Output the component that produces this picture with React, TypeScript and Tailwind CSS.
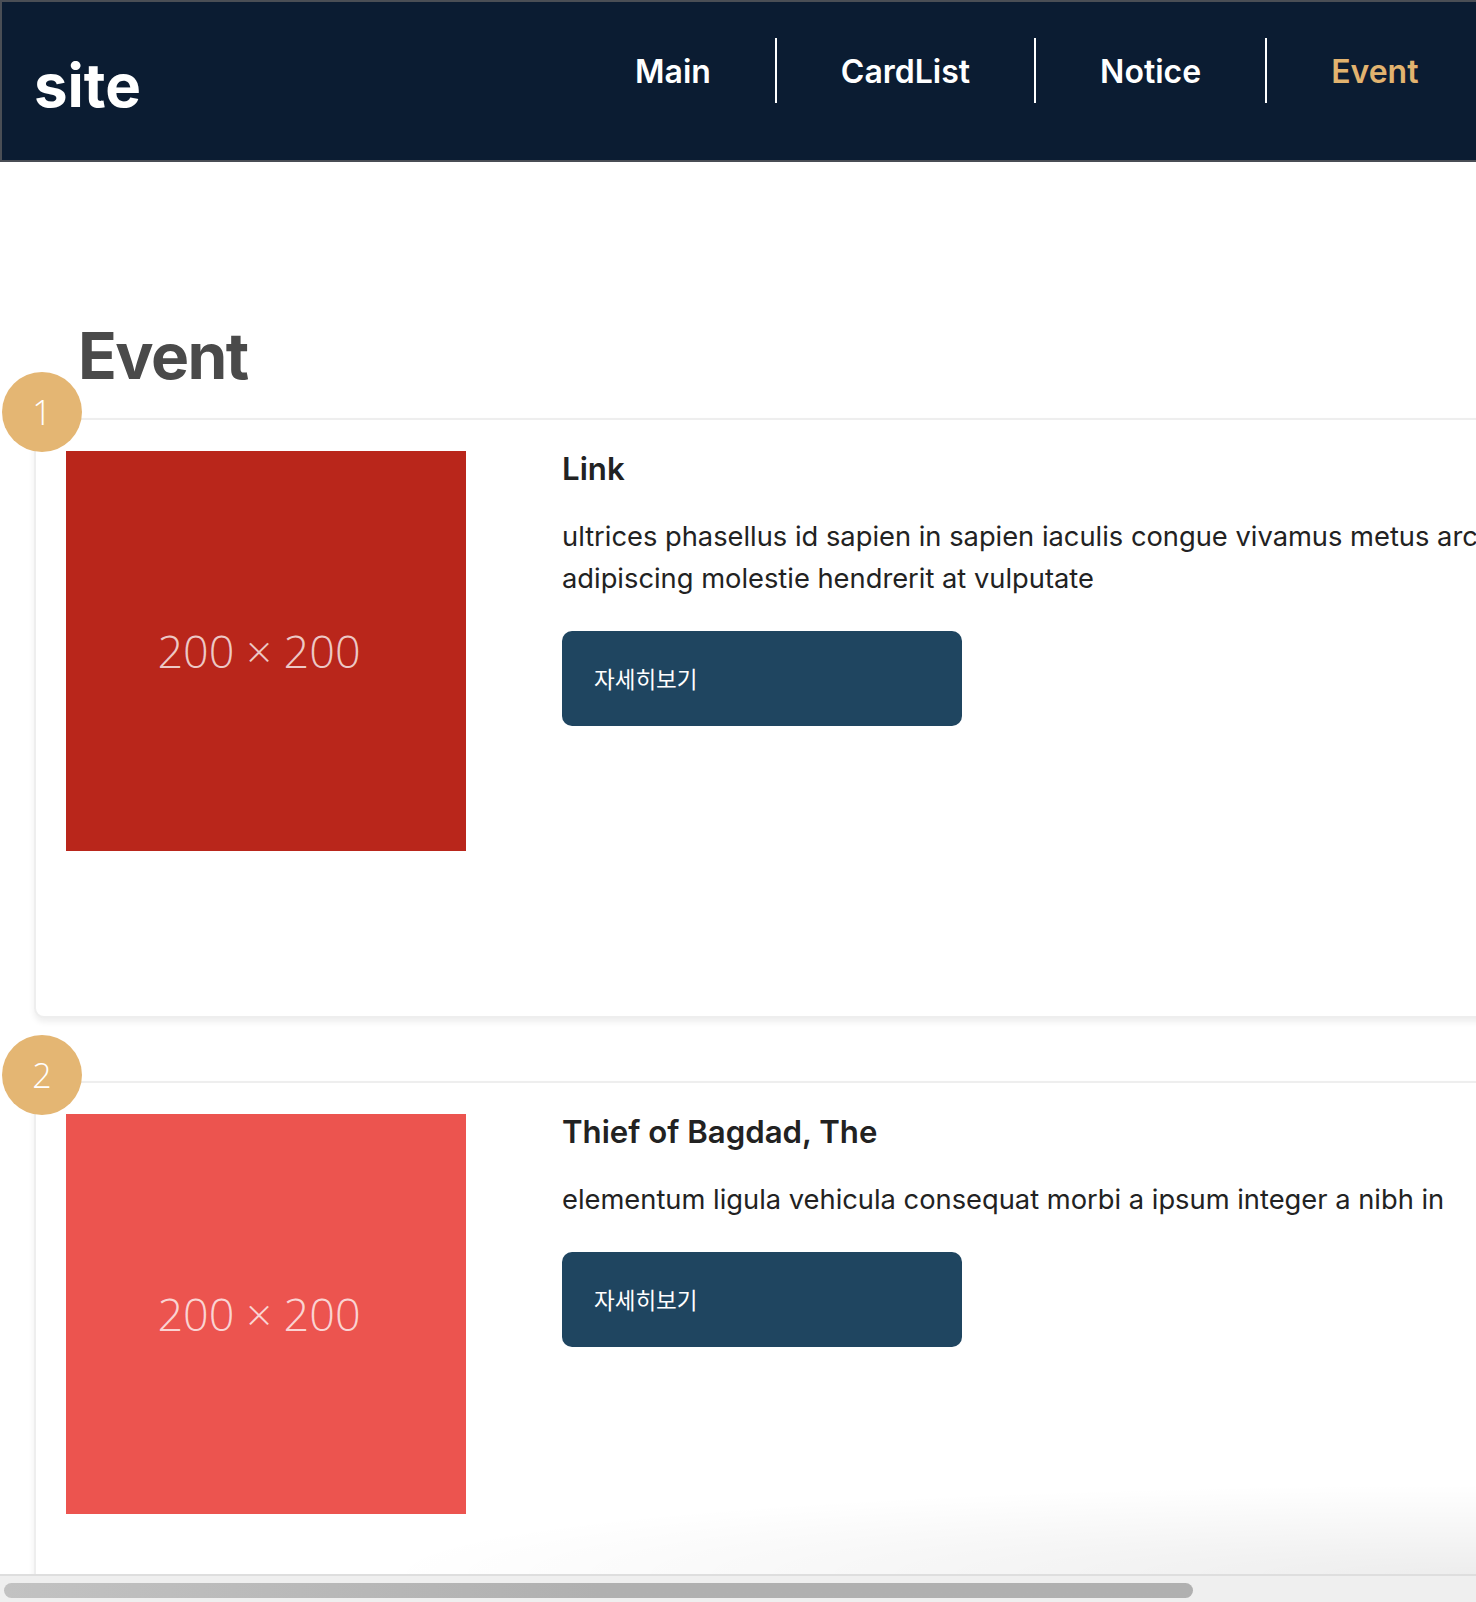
import React from "react";

type EventItem = {
  id: number;
  title: string;
  lines: string[];
  color: string;
};

const events: EventItem[] = [
  {
    id: 1,
    title: "Link",
    lines: [
      "ultrices phasellus id sapien in sapien iaculis congue vivamus metus arcu",
      "adipiscing molestie hendrerit at vulputate",
    ],
    color: "bg-[#b9261b]",
  },
  {
    id: 2,
    title: "Thief of Bagdad, The",
    lines: ["elementum ligula vehicula consequat morbi a ipsum integer a nibh in"],
    color: "bg-[#ec544f]",
  },
];

const navItems = ["Main", "CardList", "Notice", "Event"];

const EventCard = ({ item }: { item: EventItem }) => (
  <div className="relative flex h-[600px] rounded-[10px] border-2 border-[#eeeeee] bg-white px-[30px] pt-[31px] shadow-[0_4px_6px_rgba(0,0,0,0.07)]">
    {/* number badge */}
    <div className="absolute -left-[34px] -top-[48px] flex h-[80px] w-[80px] items-center justify-center rounded-full bg-[#e4b673] font-['Open_Sans',sans-serif] text-[34px] font-light text-white">
      {item.id}
    </div>

    {/* placeholder image */}
    <div className={`flex h-[400px] w-[400px] shrink-0 items-center justify-center pr-[14px] ${item.color}`}>
      <span className="font-['Open_Sans',sans-serif] text-[45px] font-light text-white/75">200 × 200</span>
    </div>

    <div className="ml-[96px] flex flex-col items-start">
      <h3 className="pt-[2px] text-[31.2px] font-semibold leading-[32px] text-[#222222]">{item.title}</h3>
      <p className="mt-[31px] whitespace-nowrap text-[27.3px] leading-[42px] text-[#222222]">
        {item.lines.map((l, i) => (
          <span key={i} className="block">
            {l}
          </span>
        ))}
      </p>
      <button className="mt-[31px] flex h-[95px] w-[400px] items-center rounded-[10px] bg-[#1f4560] pl-[32px] font-['Noto_Sans_CJK_KR',sans-serif] text-[22.5px] text-white">
        자세히보기
      </button>
    </div>
  </div>
);

export default function App() {
  return (
    <div className="relative h-[1602px] w-[1476px] overflow-hidden bg-white font-['Inter',sans-serif]">
      <div className="w-[1900px]">
        {/* Header */}
        <header className="flex h-[162px] border-2 border-r-0 border-[#4a4e55] bg-[#0b1c32]">
          <h1 className="w-[569px] shrink-0 pl-[32px] pt-[53px] text-[60px] font-bold leading-none text-white">
            site
          </h1>
          <nav className="pt-[36px]">
            <ul className="flex">
              {navItems.map((n, i) => (
                <li
                  key={n}
                  className={`flex h-[65px] items-center px-[64px] pt-[3px] text-[32px] font-semibold ${
                    i < navItems.length - 1 ? "border-r-2 border-white text-white" : "text-[#e2b36f]"
                  }`}
                >
                  {n}
                </li>
              ))}
            </ul>
          </nav>
        </header>

        {/* Content */}
        <main className="px-[34px] pt-[162px]">
          <h2 className="pl-[44px] text-[64px] font-bold leading-none tracking-tight text-[#4a4a4a]">Event</h2>
          <div className="mt-[30px] flex flex-col gap-[63px]">
            {events.map((e) => (
              <EventCard key={e.id} item={e} />
            ))}
          </div>
        </main>
      </div>

      {/* horizontal scrollbar overlay */}
      <div className="absolute bottom-[28px] left-0 right-0 h-[90px] bg-[radial-gradient(ellipse_1100px_90px_at_100%_100%,rgba(0,0,0,0.07),transparent)]" />
      <div className="absolute bottom-0 left-0 h-[28px] w-full border-t-2 border-[#dedede] bg-[#efefef]">
        <div className="ml-[4px] mt-[7px] h-[15px] w-[1189px] rounded-full bg-linear-to-r from-[#c2c2c2] via-[#b0b0b0] to-[#b0b0b0]" />
      </div>
    </div>
  );
}
